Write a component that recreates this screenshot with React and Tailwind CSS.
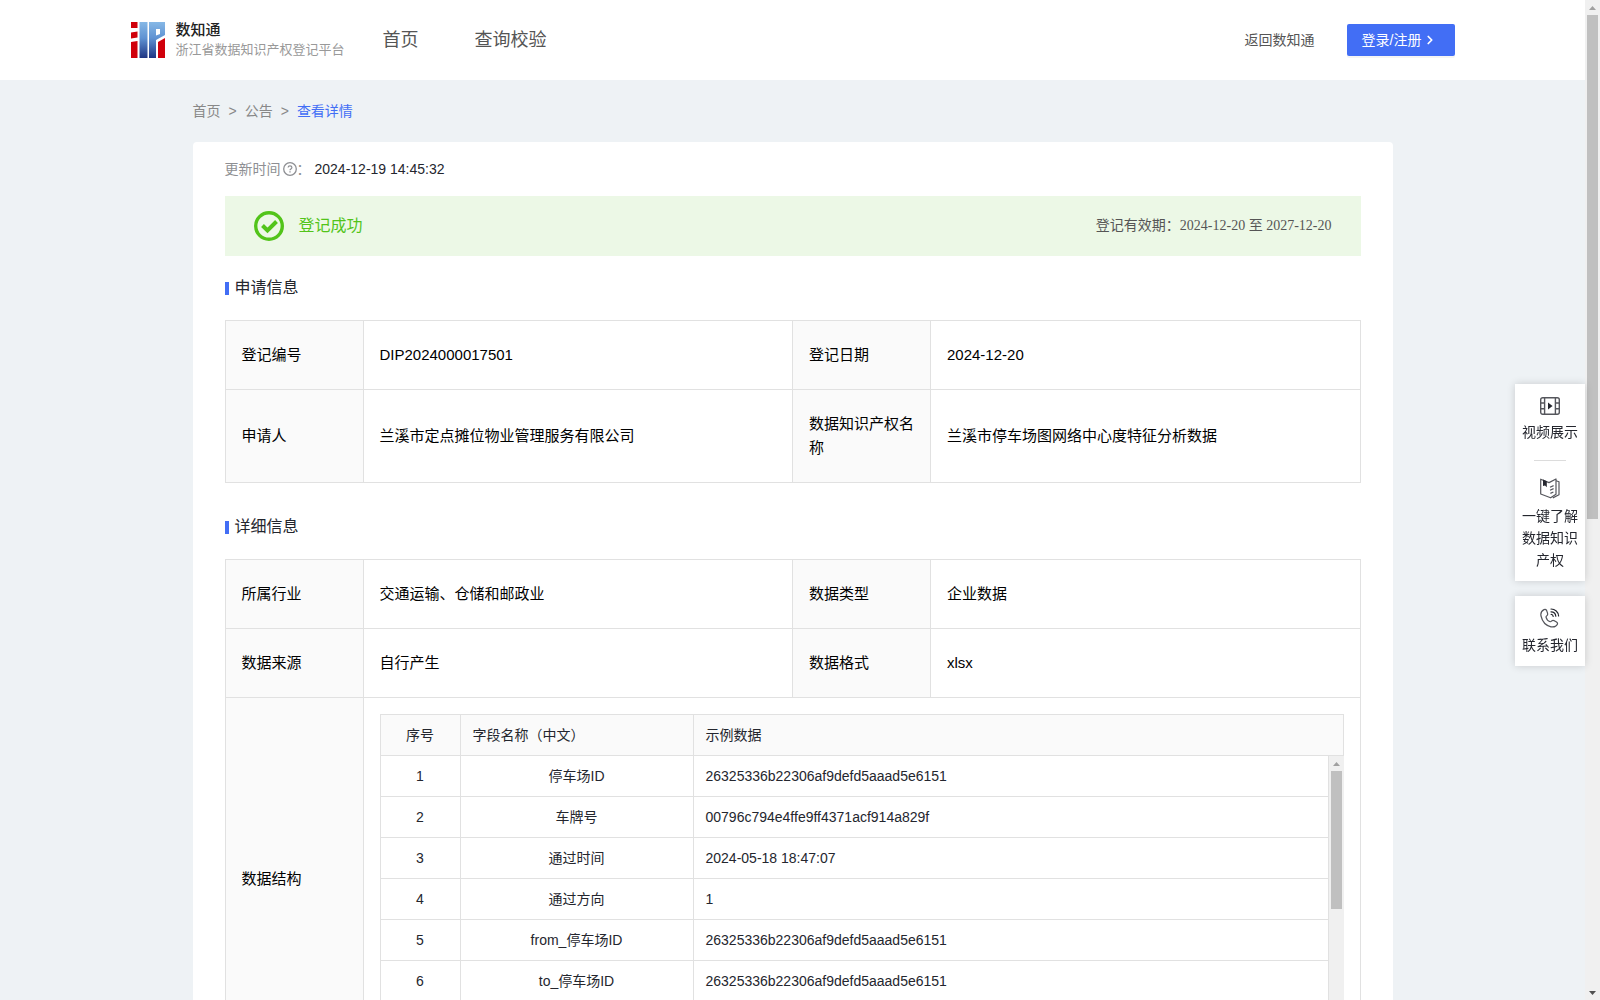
import React from 'react';
import { ChevronRight } from 'lucide-react';

const applyRows = [
  ["登记编号", "DIP2024000017501", "登记日期", "2024-12-20"],
  ["申请人", "兰溪市定点摊位物业管理服务有限公司", "数据知识产权名称", "兰溪市停车场图网络中心度特征分析数据"],
];

const detailRows = [
  ["所属行业", "交通运输、仓储和邮政业", "数据类型", "企业数据"],
  ["数据来源", "自行产生", "数据格式", "xlsx"],
];

const fields = [
  { name: "停车场ID", sample: "26325336b22306af9defd5aaad5e6151" },
  { name: "车牌号", sample: "00796c794e4ffe9ff4371acf914a829f" },
  { name: "通过时间", sample: "2024-05-18 18:47:07" },
  { name: "通过方向", sample: "1" },
  { name: "from_停车场ID", sample: "26325336b22306af9defd5aaad5e6151" },
  { name: "to_停车场ID", sample: "26325336b22306af9defd5aaad5e6151" },
];

const Logo = () => (
  <svg width="34" height="36" viewBox="0 0 34 36" aria-hidden="true">
    <defs>
      <linearGradient id="logoBlue" gradientUnits="userSpaceOnUse" x1="0" y1="0" x2="0" y2="36">
        <stop offset="0" stopColor="#86b8e6" />
        <stop offset="0.45" stopColor="#5f92d2" />
        <stop offset="1" stopColor="#1f3583" />
      </linearGradient>
    </defs>
    <path d="M0 0h6.500v6H0zM0 10.500l6.500-1v6l-6.500 1zM0 20l6.500-1v17H0z" fill="#d0000b" />
    <path d="M8.500 0h8v36h-8z" fill="url(#logoBlue)" />
    <path d="M18 0h16v13l-9 5v18h-7zM25 7v6.500l4-1.500V7z" fillRule="evenodd" fill="url(#logoBlue)" />
    <path d="M27 20l7-4v20h-7z" fill="#d0000b" />
  </svg>
);

const HelpIcon = () => (
  <svg width="14" height="14" viewBox="0 0 14 14" fill="none" stroke="#8e8f93" aria-hidden="true">
    <circle cx="7" cy="7" r="6.3" strokeWidth="1.3" />
    <path d="M5.1 5.6c0-2.4 3.8-2.4 3.8 0 0 1.4-1.9 1.4-1.9 2.7" strokeWidth="1.2" />
    <path d="M7 9.3v1.2" strokeWidth="1.3" />
  </svg>
);

const SuccessIcon = () => (
  <svg width="30" height="30" viewBox="0 0 30 30" fill="none" stroke="#52c41a" aria-hidden="true">
    <circle cx="15" cy="15" r="13.3" strokeWidth="3.4" />
    <path d="M8.5 14.500l5 5 9-9" strokeWidth="4" />
  </svg>
);

const VideoIcon = () => (
  <svg width="20" height="18" viewBox="0 0 20 18" fill="none" stroke="#55565c" strokeWidth="1.4" aria-hidden="true">
    <rect x="0.7" y="0.7" width="18.6" height="16.6" rx="2" />
    <path d="M4.6 1v16M15.4 1v16M1 6h3.6M1 11.8h3.6M15.4 6H19M15.4 11.8H19" />
    <path d="M8 5.6l4.6 3.4L8 12.4z" fill="#24262e" stroke="none" />
  </svg>
);

const BookIcon = () => (
  <svg width="20" height="21" viewBox="0 0 20 21" fill="none" stroke="#55565c" strokeWidth="1.2" strokeLinejoin="round" aria-hidden="true">
    <path d="M.7 1.2L9 4.6l7-3.6v15.300l-5.400 3.500L.7 16z" />
    <path d="M16 2.8l3 1v13l-6.2 3.1" />
    <path d="M3 1.6l3.8 1.6v6L5 7.6 3 8z" fill="#24262e" stroke="none" />
    <path d="M10 9.2l3.6-1.6M10 12.2l3.6-1.6M10.4 15.4l3-1.4" />
  </svg>
);

const PhoneIcon = () => (
  <svg width="20" height="20" viewBox="0 0 20 20" fill="none" stroke="#55565c" strokeWidth="1.2" strokeLinejoin="round" strokeLinecap="round" aria-hidden="true">
    <path d="M4 1.6C1.6 2.8.4 5 1 8c1.2 5.200 5 9.600 10 10.800 3.200.6 5.400-.6 6.400-2.600.4-1-.2-1.800-1.200-2.400-1.400-.8-2.600-1.600-3.400-1.400-1.200.2-1.600 1.600-2.600 1.300C8.400 13.200 6.400 11 6 9.200c-.2-1 1.400-1.400 1.600-2.600.2-1-.4-2.800-1-4.200C6 1.400 5 1.100 4 1.600z" />
    <path d="M11 1c4 0 7.400 3 7.600 7M11 3.800c2.600 0 4.600 1.800 4.800 4.400M11.200 6.400c1.200 0 1.800.8 2 2" stroke="#24262e" />
  </svg>
);

const Scrollbar = ({ thumb, down }) => (
  <div className="w-[15px] shrink-0 bg-[#f0f0f0] flex flex-col items-center" aria-hidden="true">
    <svg width="15" height="15" viewBox="0 0 15 15" className="shrink-0">
      <path d="M4 10l3.500-4 3.500 4z" fill="#a0a0a0" />
    </svg>
    <div className="flex-1 w-[11px]">
      <div className="w-full bg-[#c0c0c0]" style={{ height: thumb }} />
    </div>
    {down && (
      <svg width="15" height="15" viewBox="0 0 15 15" className="shrink-0">
        <path d="M4 6l3.500 4L11 6z" fill="#505050" />
      </svg>
    )}
  </div>
);

const SectionTitle = ({ children }) => (
  <h2 className="flex items-center gap-1.5 h-6 text-base text-[#24262e]">
    <span className="w-1 h-[13px] bg-[#426ef5]"></span>
    {children}
  </h2>
);

const InfoTable = ({ rows, children }) => (
  <table className="w-full table-fixed border-collapse text-[15px] leading-6 text-black">
    <colgroup>
      <col className="w-[138px]" />
      <col />
      <col className="w-[138px]" />
      <col />
    </colgroup>
    <tbody>
      {rows.map((row) => (
        <tr key={row[0]}>
          {row.map((text, i) =>
            i % 2 === 0 ? (
              <th key={i} scope="row" className="border border-[#e1e1e1] bg-[#fafafa] py-[22px] pl-4 pr-3 text-left font-normal">{text}</th>
            ) : (
              <td key={i} className="border border-[#e1e1e1] px-4 py-[22px]">{text}</td>
            )
          )}
        </tr>
      ))}
      {children}
    </tbody>
  </table>
);

const FieldCols = () => (
  <colgroup>
    <col className="w-20" />
    <col className="w-[233px]" />
    <col />
  </colgroup>
);

// header stays put, only the body scrolls
const FieldTable = () => (
  <div className="text-sm text-[#24262e]">
    <table className="w-full table-fixed border-separate border-spacing-0 border-l border-t border-[#e1e1e1]">
      <FieldCols />
      <thead>
        <tr className="h-[41px] bg-[#fafafa]">
          <th className="border-b border-r border-[#e1e1e1] px-3 font-normal">序号</th>
          <th className="border-b border-r border-[#e1e1e1] px-3 font-normal text-left">字段名称（中文）</th>
          <th className="border-b border-r border-[#e1e1e1] px-3 font-normal text-left">示例数据</th>
        </tr>
      </thead>
    </table>
    <div className="flex h-72">
      <div className="flex-1 overflow-y-auto [scrollbar-width:none]">
        <table className="w-full table-fixed border-separate border-spacing-0 border-l border-[#e1e1e1]">
          <FieldCols />
          <tbody>
            {fields.map((f, i) => (
              <tr key={f.name} className="h-[41px]">
                <td className="border-b border-r border-[#e1e1e1] px-3 text-center">{i + 1}</td>
                <td className="border-b border-r border-[#e1e1e1] px-3 text-center">{f.name}</td>
                <td className="border-b border-r border-[#e1e1e1] px-3">{f.sample}</td>
              </tr>
            ))}
          </tbody>
        </table>
      </div>
      <Scrollbar thumb="138px" />
    </div>
  </div>
);

const Header = () => (
  <header className="bg-white px-6">
    <div className="mx-auto flex h-20 max-w-[1324px] items-center">
      <a href="#" className="flex items-center gap-[11px]">
        <Logo />
        <span className="block">
          <span className="block text-[15px] leading-5 font-medium text-[#222]">数知通</span>
          <span className="block text-[13px] leading-5 text-[#999]">浙江省数据知识产权登记平台</span>
        </span>
      </a>
      <nav className="ml-[38px] flex gap-14 text-lg text-[#555]">
        <a href="#">首页</a>
        <a href="#">查询校验</a>
      </nav>
      <a href="#" className="ml-auto text-sm text-[#555]">返回数知通</a>
      <button className="ml-8 flex h-8 w-[108px] items-center gap-0.5 rounded-xs bg-[#426ef5] pl-[15px] text-sm text-white shadow-[0_2px_0_rgba(0,0,0,0.045)]">
        登录/注册 <ChevronRight size={14} strokeWidth={3} />
      </button>
    </div>
  </header>
);

const SideTools = () => (
  <aside className="absolute right-[15px] top-96 flex w-[70px] flex-col gap-[15px] text-center text-sm leading-[22px] text-[#24262e]">
    <div className="flex flex-col bg-white pb-2.5 shadow-[0_0_8px_rgba(0,0,0,0.16)]">
      <button className="flex flex-col items-center gap-1.5 pt-[13px]">
        <VideoIcon />
        <span>视频展示</span>
      </button>
      <hr className="mx-auto mt-[17px] w-8 border-[#dcdcdc]" />
      <button className="flex flex-col items-center gap-1.5 px-1.5 pt-[17px]">
        <BookIcon />
        <span>一键了解数据知识产权</span>
      </button>
    </div>
    <button className="flex h-[70px] flex-col items-center gap-1.5 bg-white pt-3 shadow-[0_0_8px_rgba(0,0,0,0.16)]">
      <PhoneIcon />
      <span>联系我们</span>
    </button>
  </aside>
);

const App = () => {
  return (
    <div className="flex h-screen overflow-hidden font-['Liberation_Sans','Noto_Sans_CJK_SC',sans-serif]">
      <div className="flex-1 overflow-y-auto bg-[#eef2f5] [scrollbar-width:none]">
        <Header />

        <main className="mx-auto max-w-[1200px]">
          {/* Breadcrumb */}
          <nav className="flex h-[62px] items-center gap-2 text-sm text-[#888]">
            <a href="#">首页</a>
            <span>&gt;</span>
            <a href="#">公告</a>
            <span>&gt;</span>
            <a href="#" className="text-[#426ef5]">查看详情</a>
          </nav>

          <div className="rounded-t bg-white px-8 pb-8 pt-4">
            <div className="flex h-[22px] items-center text-sm text-[#8e8f93]">
              更新时间
              <span className="ml-0.5"><HelpIcon /></span>
              <span>：</span>
              <time className="ml-1 text-[#24262e]">2024-12-19 14:45:32</time>
            </div>

            {/* Status */}
            <div className="mt-4 flex h-[60px] items-center bg-[#ecf8e6] px-[29px]">
              <SuccessIcon />
              <span className="ml-[15px] text-base text-[#52c41a]">登记成功</span>
              <span className="ml-auto text-sm text-[#555] font-['Liberation_Serif','Noto_Sans_CJK_SC',serif]">
                登记有效期：2024-12-20 至 2027-12-20
              </span>
            </div>

            <section className="mt-5 flex flex-col gap-5">
              <SectionTitle>申请信息</SectionTitle>
              <InfoTable rows={applyRows} />
            </section>

            <section className="mt-8 flex flex-col gap-5">
              <SectionTitle>详细信息</SectionTitle>
              <InfoTable rows={detailRows}>
                <tr>
                  <th scope="row" className="border border-[#e1e1e1] bg-[#fafafa] pl-4 pr-3 text-left font-normal">数据结构</th>
                  <td colSpan={3} className="border border-[#e1e1e1] p-4">
                    <FieldTable />
                  </td>
                </tr>
              </InfoTable>
            </section>
          </div>
        </main>
      </div>

      <Scrollbar thumb="52%" down />
      <SideTools />
    </div>
  );
};

export default App;
